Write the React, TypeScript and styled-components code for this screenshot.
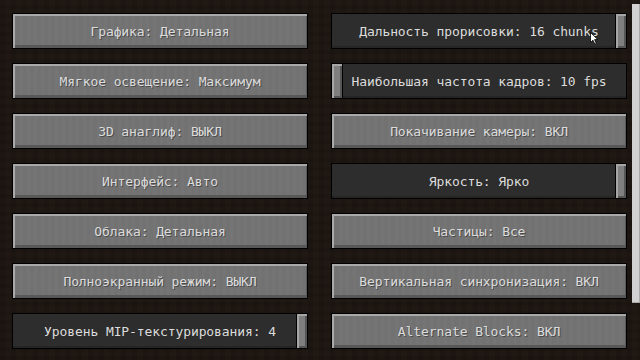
import React from "react";
import styled, { createGlobalStyle } from "styled-components";

const Global = createGlobalStyle`
  html, body { margin: 0; padding: 0; background: #1c1511; }
  * { box-sizing: border-box; }
`;

const Screen = styled.div`
  position: relative;
  width: 640px;
  height: 360px;
  overflow: hidden;
  display: flex;
  background-color: #1d1612;
  background-image:
    repeating-linear-gradient(90deg, rgba(0,0,0,0.05) 0 5px, rgba(60,44,34,0.05) 5px 11px),
    repeating-linear-gradient(0deg, rgba(0,0,0,0.06) 0 4px, rgba(55,40,30,0.05) 4px 9px);
`;

const Grid = styled.div`
  display: grid;
  grid-template-columns: 296px 296px;
  grid-auto-rows: 36px;
  column-gap: 23px;
  row-gap: 14px;
  padding: 13px 0 0 12px;
  width: 632px;
`;

const ScrollTrack = styled.div`
  width: 8px;
  padding-top: 4px;
  display: flex;
  flex-direction: column;
`;

const ScrollThumb = styled.div`
  height: 299px;
  background: #d2d2d2;
  box-shadow: inset -1px -1px 0 #a8a8a8;
`;

const Label = styled.span`
  font-family: "DejaVu Sans Mono", "Liberation Mono", monospace;
  font-size: 13px;
  letter-spacing: -0.1px;
  line-height: 1;
  color: #dcdcdc;
  text-shadow: 1px 1px 0 rgba(40,40,40,0.55);
  white-space: nowrap;
  position: relative;
  z-index: 1;
`;

const Button = styled.div`
  position: relative;
  display: flex;
  align-items: center;
  justify-content: center;
  border: 1px solid #000;
  background-color: #737373;
  background-image:
    repeating-linear-gradient(90deg, rgba(255,255,255,0.012) 0 3px, rgba(0,0,0,0.012) 3px 7px);
  box-shadow: inset 2px 2px 0 #a9a9a9, inset -1px -3px 0 #585858;
  padding-top: 1px;
`;

const Slider = styled.div`
  position: relative;
  display: flex;
  align-items: center;
  justify-content: center;
  border: 1px solid #000;
  background-color: #2d2d2d;
  box-shadow: inset 0 -2px 0 #252525;
  padding-top: 1px;
`;

const Knob = styled.div`
  position: absolute;
  top: -1px;
  bottom: -1px;
  width: 12px;
  border: 1px solid #000;
  background: #7f7f7f;
  box-shadow: inset 2px 2px 0 #a6a6a6, inset -2px -2px 0 #555;
`;

const Cursor = styled.svg`
  position: absolute;
  left: 590px;
  top: 32px;
  z-index: 5;
`;

type Item =
  | { kind: "button"; text: string }
  | { kind: "slider"; text: string; value: number };

const items: Item[] = [
  { kind: "button", text: "Графика: Детальная" },
  { kind: "slider", text: "Дальность прорисовки: 16 chunks", value: 1 },
  { kind: "button", text: "Мягкое освещение: Максимум" },
  { kind: "slider", text: "Наибольшая частота кадров: 10 fps", value: 0 },
  { kind: "button", text: "3D анаглиф: ВЫКЛ" },
  { kind: "button", text: "Покачивание камеры: ВКЛ" },
  { kind: "button", text: "Интерфейс: Авто" },
  { kind: "slider", text: "Яркость: Ярко", value: 1 },
  { kind: "button", text: "Облака: Детальная" },
  { kind: "button", text: "Частицы: Все" },
  { kind: "button", text: "Полноэкранный режим: ВЫКЛ" },
  { kind: "button", text: "Вертикальная синхронизация: ВКЛ" },
  { kind: "slider", text: "Уровень MIP-текстурирования: 4", value: 1 },
  { kind: "button", text: "Alternate Blocks: ВКЛ" },
];

const KNOB_W = 12;
const SLIDER_INNER = 296 - 2;

export default function App() {
  return (
    <>
      <Global />
      <Screen>
        <Grid>
          {items.map((it, i) =>
            it.kind === "button" ? (
              <Button key={i}>
                <Label>{it.text}</Label>
              </Button>
            ) : (
              <Slider key={i}>
                <Knob style={{ left: -1 + it.value * (SLIDER_INNER - KNOB_W + 2) }} />
                <Label>{it.text}</Label>
              </Slider>
            )
          )}
        </Grid>
        <ScrollTrack>
          <ScrollThumb />
        </ScrollTrack>
        <Cursor width="9" height="13" viewBox="0 0 9 13">
          <path d="M0.5 0.5 L0.5 10.5 L3 8.2 L4.8 12.2 L6.3 11.5 L4.6 7.6 L7.8 7.6 Z" fill="#ffffff" stroke="#000" strokeWidth="0.8" />
        </Cursor>
      </Screen>
    </>
  );
}
